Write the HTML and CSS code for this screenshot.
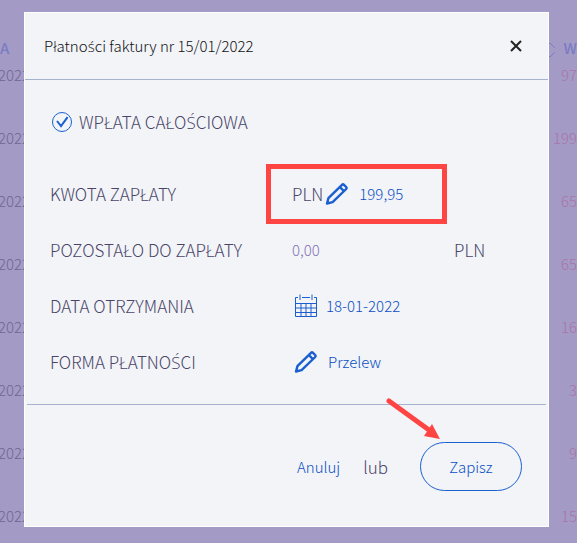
FILE: index.html
```
<!DOCTYPE html>
<html lang="pl">
<head>
    <meta charset="UTF-8">
    <meta name="viewport" content="width=device-width, initial-scale=1.0">
    <title>Płatności faktury</title>
    <link rel="stylesheet" href="styles.css">
</head>
<body>

<svg class="symbols" aria-hidden="true">
    <symbol id="pencil" viewBox="0 0 24 24">
        <path d="M2 21.5 L3.4 16.2 L17 2.8 Q18 1.8 19 2.8 L21.2 5 Q22.2 6 21.2 7 L7.6 20.2 Z M14.8 5 L19 9.2"/>
    </symbol>
</svg>

<div class="page">
    <table class="invoices">
        <thead>
        <tr>
            <th class="date">A</th>
            <th class="amount">
                <svg class="sort" viewBox="0 0 12 16"><path d="M1 6 L6 1 L11 6 M1 10 L6 15 L11 10"/></svg>
                W
            </th>
        </tr>
        </thead>
        <tbody>
        <tr><td class="date">2022</td><td class="amount">97</td></tr>
        <tr><td class="date">2022</td><td class="amount">199</td></tr>
        <tr><td class="date">2022</td><td class="amount">65</td></tr>
        <tr><td class="date">2022</td><td class="amount">65</td></tr>
        <tr><td class="date">2022</td><td class="amount">16</td></tr>
        <tr><td class="date">2022</td><td class="amount">3</td></tr>
        <tr><td class="date">2022</td><td class="amount">9</td></tr>
        <tr><td class="date">2022</td><td class="amount">15</td></tr>
        </tbody>
    </table>

    <form class="modal" role="dialog" aria-labelledby="modal_title">
        <div class="modal_header">
            <h1 id="modal_title" class="modal_title">Płatno<span class="pl">ś</span>ci faktury nr 15/01/2022</h1>
            <button type="button" class="close" aria-label="Zamknij">
                <svg viewBox="0 0 12 12"><path d="M1 1 L11 11 M11 1 L1 11"/></svg>
            </button>
        </div>

        <div class="modal_body">
            <label class="full_payment">
                <span class="check">
                    <input type="checkbox" class="check_input" checked>
                    <svg class="check_mark" viewBox="0 0 20 20"><path d="M5 9 L9 14 L15.6 5.2"/></svg>
                </span>
                <span>WPŁATA CAŁO<span class="pl">Ś</span>CIOWA</span>
            </label>

            <div class="row">
                <label for="amount">KWOTA ZAPŁATY</label>
                <div class="value value_amount marked">
                    <span>PLN</span>
                    <svg class="icon pencil"><use href="#pencil"/></svg>
                    <input type="text" id="amount" class="field" value="199,95">
                </div>
            </div>

            <div class="row">
                <label for="rest">POZOSTAŁO DO ZAPŁATY</label>
                <output id="rest" class="rest">0,00</output>
                <span>PLN</span>
            </div>

            <div class="row">
                <label for="date">DATA OTRZYMANIA</label>
                <div class="value">
                    <svg class="icon calendar" viewBox="0 0 24 24">
                        <path d="M4 3.5 H1.5 V22.5 H22.5 V3.5 H20 M8 3.5 H16 M6 0.5 V6 M18 0.5 V6 M1.5 9.5 H22.5 M1.5 14 H22.5 M1.5 18.5 H22.5 M7 9.5 V22.5 M12 9.5 V22.5 M17 9.5 V22.5"/>
                    </svg>
                    <input type="text" id="date" class="field" value="18-01-2022">
                </div>
            </div>

            <div class="row">
                <label for="method">FORMA PŁATNO<span class="pl">Ś</span>CI</label>
                <div class="value">
                    <svg class="icon pencil"><use href="#pencil"/></svg>
                    <select id="method" class="field">
                        <option>Przelew</option>
                    </select>
                </div>
            </div>
        </div>

        <div class="modal_footer">
            <a href="#" class="cancel">Anuluj</a>
            <span class="or">lub</span>
            <button type="submit" class="save">Zapisz</button>
            <svg class="arrow" viewBox="0 0 56 44">
                <path class="arrow_line" d="M4 4 L44 33"/>
                <path class="arrow_head" d="M55 42 L39 39 L47 27 Z"/>
            </svg>
        </div>
    </form>
</div>

</body>
</html>
```
FILE: styles.css
```
* {
    box-sizing: border-box;
}

body {
    margin: 0;
    background-color: #a39bc6;
    font-family: "Noto Sans CJK JP", "Open Sans", sans-serif;
    font-weight: 300;
    color: #4a4568;
}

input, select, button {
    font: inherit;
    color: inherit;
    background: none;
    border: 0;
    padding: 0;
    margin: 0;
    appearance: none;
}

svg {
    fill: none;
    stroke: currentColor;
}

/* accented letters that the CJK font does not have */
.pl {
    font-family: "Open Sans", sans-serif;
    line-height: 1;
}

.symbols {
    position: absolute;
    width: 0;
    height: 0;
}

.page {
    position: relative;
    min-height: 100vh;
    overflow: hidden;
}

/* list of invoices under the dialog */
.invoices {
    width: 100%;
    margin-top: 38px;
    border-collapse: collapse;
    font-size: 15px;
    line-height: 20px;
    color: #71668f;
}

.invoices th {
    height: 20px;
    padding: 0;
    font-weight: 500;
    color: #7c7cc4;
}

.invoices td {
    height: 63px;
    padding: 7px 0 0;
    vertical-align: top;
}

.invoices .date {
    text-align: left;
}

.invoices .amount {
    text-align: right;
}

.invoices td.date {
    text-indent: -2px;
}

.invoices td.amount {
    color: #aa74a8;
}

.sort {
    width: 12px;
    height: 16px;
    margin-right: 4px;
    vertical-align: middle;
}

.modal {
    position: absolute;
    top: 12px;
    left: 24px;
    right: 28px;
    background-color: #f2f4f8;
    border: 1px solid #ffffff;
    font-size: 17px;
    line-height: 24px;
}

.modal_header {
    display: flex;
    justify-content: space-between;
    align-items: center;
    height: 67px;
    padding: 0 26px 0 19px;
    border-bottom: 1px solid #a5b3d0;
}

.modal_title {
    margin: 0;
    font-size: 15px;
    font-weight: 300;
    color: #111111;
}

.close {
    width: 12px;
    height: 24px;
    color: #222222;
    cursor: pointer;
}

.close svg {
    display: block;
    width: 12px;
    stroke-width: 2;
}

.modal_body {
    margin: 0 2px;
    padding: 14px 23px;
    border-bottom: 1px solid #a5b3d0;
}

.full_payment {
    display: flex;
    align-items: center;
    gap: 7px;
    height: 56px;
    margin-bottom: 16px;
    padding-left: 2px;
}

.check {
    display: grid;
    color: #1a5fd0;
}

.check_input {
    grid-area: 1 / 1;
    width: 20px;
    height: 20px;
    border: 1px solid #1a5fd0;
    border-radius: 50%;
}

.check_mark {
    grid-area: 1 / 1;
    width: 20px;
    height: 20px;
    stroke-width: 2;
    pointer-events: none;
    visibility: hidden;
}

.check_input:checked + .check_mark {
    visibility: visible;
}

.row {
    display: grid;
    grid-template-columns: 242px 162px 1fr;
    align-items: center;
    height: 56px;
}

.value {
    display: flex;
    align-items: center;
    gap: 8px;
    padding-left: 2px;
}

.value_amount {
    gap: 2px;
    padding-left: 0;
}

.value_amount .field {
    margin-left: 8px;
}

/* red frame round the amount */
.marked {
    position: relative;
}

.marked::after {
    content: "";
    position: absolute;
    top: -18px;
    bottom: -18px;
    left: -26px;
    right: 7px;
    border: 5px solid #ff4444;
    pointer-events: none;
}

.field {
    width: 84px;
    height: 24px;
    font-size: 15px;
    color: #0b4fc4;
}

select.field {
    padding-left: 2px;
}

.rest {
    font-size: 15px;
    color: #8270b4;
}

.icon {
    flex: none;
    width: 24px;
    height: 24px;
    color: #1a5fd0;
}

.pencil {
    stroke-width: 2.4;
    stroke-linejoin: round;
}

.modal_footer {
    position: relative;
    display: flex;
    justify-content: flex-end;
    align-items: center;
    height: 121px;
    padding: 2px 26px 0 0;
}

.cancel {
    margin-right: 23px;
    font-size: 15px;
    color: #0b4fc4;
    text-decoration: none;
}

.or {
    margin-right: 32px;
}

.save {
    width: 102px;
    height: 49px;
    border: 1px solid #1a5fd0;
    border-radius: 25px;
    font-size: 15px;
    color: #0b4fc4;
    cursor: pointer;
}

.arrow {
    position: absolute;
    top: -8px;
    right: 107px;
    width: 56px;
    height: 44px;
}

.arrow_line {
    stroke: #ff4444;
    stroke-width: 5;
    stroke-linecap: round;
}

.arrow_head {
    fill: #ff4444;
    stroke: none;
}
```
